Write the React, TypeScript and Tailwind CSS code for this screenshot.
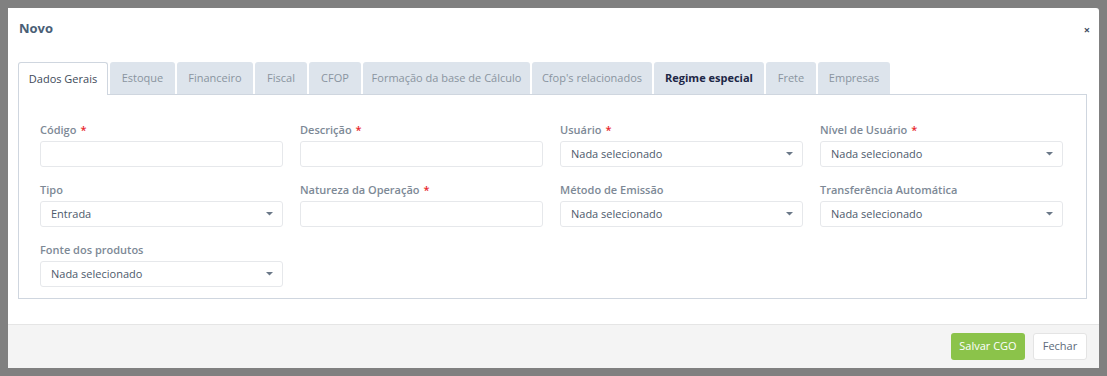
import React from "react";

const tabs = [
  { label: "Dados Gerais", w: "w-[90px]", active: true },
  { label: "Estoque", w: "w-[65px]" },
  { label: "Financeiro", w: "w-[76px]" },
  { label: "Fiscal", w: "w-[52px]" },
  { label: "CFOP", w: "w-[52px]" },
  { label: "Formação da base de Cálculo", w: "w-[167px]" },
  { label: "Cfop's relacionados", w: "w-[120px]" },
  { label: "Regime especial", w: "w-[110px]", bold: true },
  { label: "Frete", w: "w-[50px]" },
  { label: "Empresas", w: "w-[72px]" },
];

type Field = { label: string; required?: boolean; select?: string };

const rows: Field[][] = [
  [
    { label: "Código", required: true },
    { label: "Descrição", required: true },
    { label: "Usuário", required: true, select: "Nada selecionado" },
    { label: "Nível de Usuário", required: true, select: "Nada selecionado" },
  ],
  [
    { label: "Tipo", select: "Entrada" },
    { label: "Natureza da Operação", required: true },
    { label: "Método de Emissão", select: "Nada selecionado" },
    { label: "Transferência Automática", select: "Nada selecionado" },
  ],
  [{ label: "Fonte dos produtos", select: "Nada selecionado" }],
];

const Caret = () => (
  <svg width="7" height="4" viewBox="0 0 7 4" className="shrink-0">
    <path d="M0 0h7L3.5 3.5z" fill="#6b7888" />
  </svg>
);

const FormField = ({ field }: { field: Field }) => (
  <div className="flex flex-col">
    <label className="h-[19px] text-[11px] font-semibold leading-[16px] text-[#7d8996]">
      {field.label}
      {field.required && <span className="ml-1 text-[#e8262c]">*</span>}
    </label>
    <div className="flex h-[26px] items-center justify-between rounded-[3px] border border-[#e6e8eb] bg-white pl-[10px] pr-[9px]">
      <span className="text-[11px] text-[#4d5a6b]">{field.select ?? ""}</span>
      {field.select && <Caret />}
    </div>
  </div>
);

export default function App() {
  return (
    <div
      className="h-[376px] w-[1107px] bg-[#808080] p-[8px]"
      style={{ fontFamily: '"Open Sans", "Noto Sans", sans-serif' }}
    >
      <div className="flex h-[360px] w-[1091px] flex-col overflow-hidden rounded-tr-[3px] bg-white">
        <div className="flex h-[41px] items-center justify-between pl-[11px] pr-[9px] pt-[1px]">
          <span className="text-[13px] font-bold text-[#4a5e76]">Novo</span>
          <span className="text-[11px] font-bold leading-none text-[#3f4d5f]">×</span>
        </div>

        <div className="px-[10px] pt-[13px]">
          <div className="flex gap-[2px]">
            {tabs.map((t) => (
              <div
                key={t.label}
                className={`flex items-center justify-center rounded-t-[3px] text-[11px] ${t.w} ${
                  t.active
                    ? "relative z-10 -mb-px h-[33px] border border-b-0 border-[#cfd6df] bg-white text-[#3e4a59]"
                    : t.bold
                    ? "h-[32px] bg-[#dde4ec] font-bold text-[#1d2746]"
                    : "h-[32px] bg-[#dde4ec] text-[#8a94a0]"
                }`}
              >
                {t.label}
              </div>
            ))}
          </div>
          <div className="h-[205px] w-[1069px] border border-[#cfd6df] pl-[21px] pt-[27px]">
            <div className="flex flex-col gap-[15px]">
              {rows.map((row, i) => (
                <div key={i} className="grid grid-cols-[243px_243px_243px_243px] gap-x-[17px]">
                  {row.map((f) => (
                    <FormField key={f.label} field={f} />
                  ))}
                </div>
              ))}
            </div>
          </div>
        </div>

        <div className="mt-auto flex h-[44px] items-center justify-end gap-[8px] border-t border-[#e5e5e5] bg-[#f4f4f4] pr-[12px]">
          <button className="h-[27px] w-[74px] rounded-[3px] bg-[#8bc34a] text-[11px] text-white">
            Salvar CGO
          </button>
          <button className="h-[27px] w-[54px] rounded-[3px] border border-[#e4e4e4] bg-white text-[11px] text-[#5d6a7a]">
            Fechar
          </button>
        </div>
      </div>
    </div>
  );
}
